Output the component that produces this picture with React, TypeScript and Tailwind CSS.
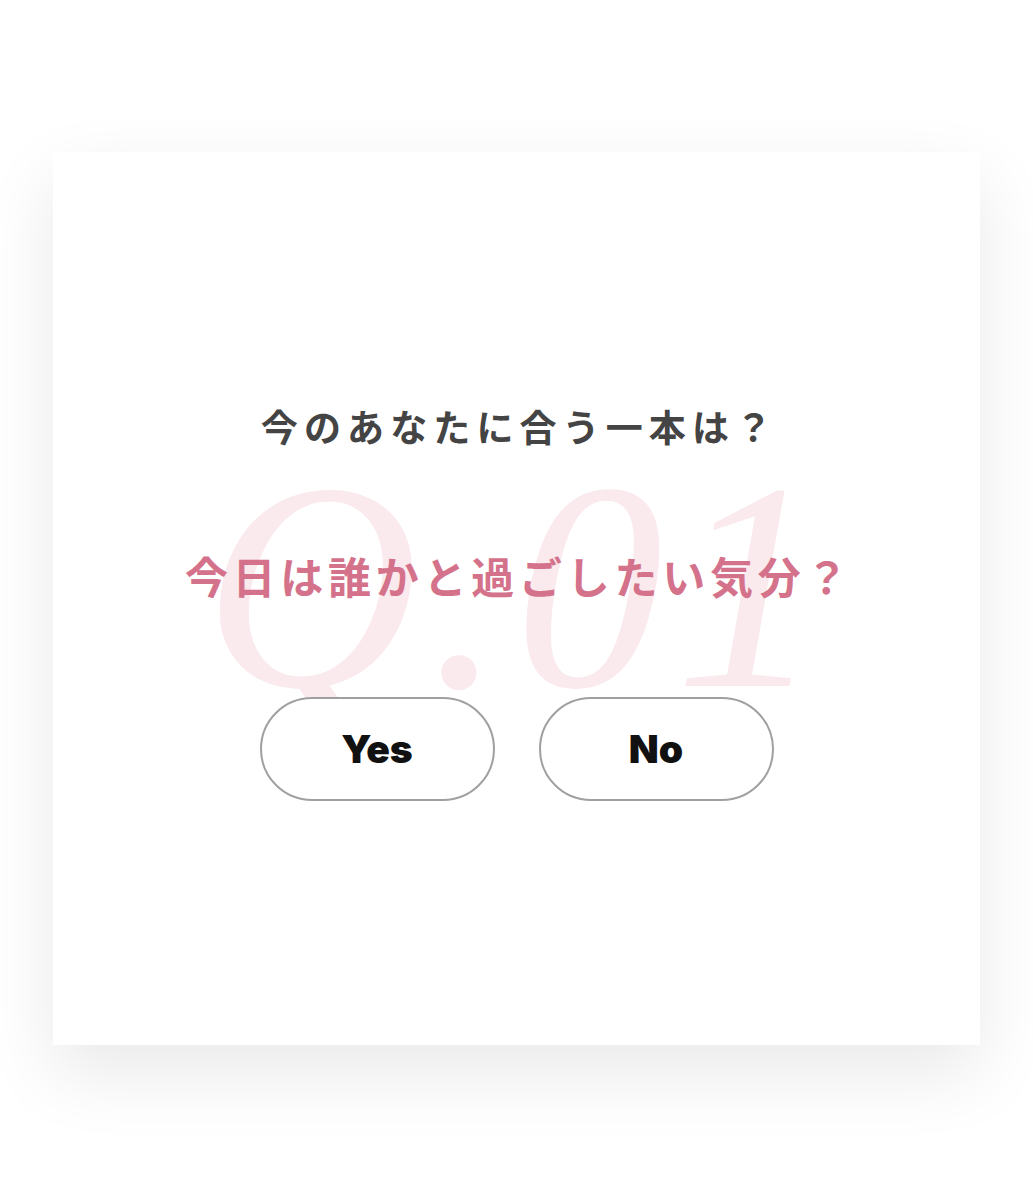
export default function App() {
  return (
    <div className="min-h-[1200px] w-full bg-white pt-[152px] font-['Inter','Noto_Sans_CJK_JP',sans-serif]">
      <div className="relative ml-[53px] flex h-[893px] w-[927px] flex-col items-center bg-white shadow-[0_28px_70px_rgba(0,0,0,0.09)]">
        <h1 className="mt-[251px] pl-[6px] text-[37px] font-bold leading-[52px] tracking-[0.165em] text-[#444444]">
          今のあなたに合う一本は？
        </h1>

        <div className="relative mt-[95px] flex w-full justify-center">
          <span className="pointer-events-none absolute left-[calc(50%-313px)] top-[-112px] select-none font-['Liberation_Serif',serif] text-[296px] italic leading-none tracking-[0.04em] text-[#fae9ed]">
            Q.01
          </span>
          <p className="relative pl-[5px] text-[43px] font-bold leading-[56px] tracking-[0.11em] text-[#d5728b]">
            今日は誰かと過ごしたい気分？
          </p>
        </div>

        <div className="relative mt-[91px] flex gap-[44px]">
          <button className="h-[104px] w-[235px] rounded-full border-2 border-[#a0a0a0] bg-white text-[39px] font-black text-[#111111]">
            Yes
          </button>
          <button className="h-[104px] w-[235px] rounded-full border-2 border-[#a0a0a0] bg-white text-[39px] font-black text-[#111111]">
            No
          </button>
        </div>
      </div>
    </div>
  );
}
